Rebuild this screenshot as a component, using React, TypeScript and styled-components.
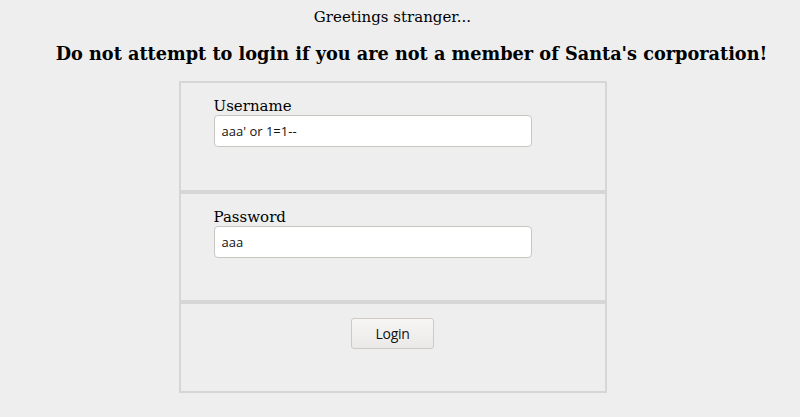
import * as React from 'react';
import styled, { createGlobalStyle } from 'styled-components';

const GlobalStyle = createGlobalStyle`
	html, body {
		margin: 0;
		background: #eeeeee;
	}
	body {
		padding: 8px 0 0;
		font-family: "DejaVu Serif", serif;
		font-size: 15px;
		color: #000;
	}
`;

const Page = styled.div`
	width: 785px;
	display: flex;
	flex-direction: column;
	align-items: center;
`;

const Greeting = styled.div`
	text-align: center;
`;

const Warning = styled.h3`
	margin: 16.5px 0 17.5px;
	padding-left: 38px;
	font-size: 17.7px;
	font-weight: bold;
	text-align: center;
	white-space: nowrap;
`;

const Form = styled.form`
	width: 428px;
	display: flex;
	flex-direction: column;
`;

const Section = styled.div<{ $center?: boolean }>`
	border: 2px solid #d6d6d6;
	padding: ${p => (p.$center ? '14px 0 42px' : '14px 0 42.5px 33px')};
	display: flex;
	flex-direction: column;
	align-items: ${p => (p.$center ? 'center' : 'flex-start')};
`;

const Label = styled.label`
	display: block;
`;

const Input = styled.input`
	box-sizing: border-box;
	width: 318px;
	height: 32px;
	margin: 0;
	padding: 0 7px;
	border: 1px solid #c9c6c2;
	border-radius: 4px;
	background: #fff;
	font-family: "Open Sans", sans-serif;
	font-size: 13px;
	color: #111;
	outline: none;
`;

const Button = styled.button`
	box-sizing: border-box;
	width: 83px;
	height: 31px;
	margin: 0;
	border: 1px solid #cdcac6;
	border-radius: 3px;
	background: linear-gradient(#f7f6f5, #ebe9e7);
	font-family: "Open Sans", sans-serif;
	font-size: 14px;
	letter-spacing: -0.3px;
	color: #111;
	cursor: pointer;
`;

export default function App() {
	const [user, setUser] = React.useState("aaa' or 1=1--");
	const [pass, setPass] = React.useState('aaa');

	return (
		<>
			<GlobalStyle />
			<Page>
				<Greeting>Greetings stranger...</Greeting>
				<Warning>Do not attempt to login if you are not a member of Santa's corporation!</Warning>
				<Form onSubmit={e => e.preventDefault()}>
					<Section>
						<Label htmlFor="username">Username</Label>
						<Input id="username" value={user} onChange={e => setUser(e.target.value)} />
					</Section>
					<Section>
						<Label htmlFor="password">Password</Label>
						<Input id="password" value={pass} onChange={e => setPass(e.target.value)} />
					</Section>
					<Section $center>
						<Button type="submit">Login</Button>
					</Section>
				</Form>
			</Page>
		</>
	);
}
